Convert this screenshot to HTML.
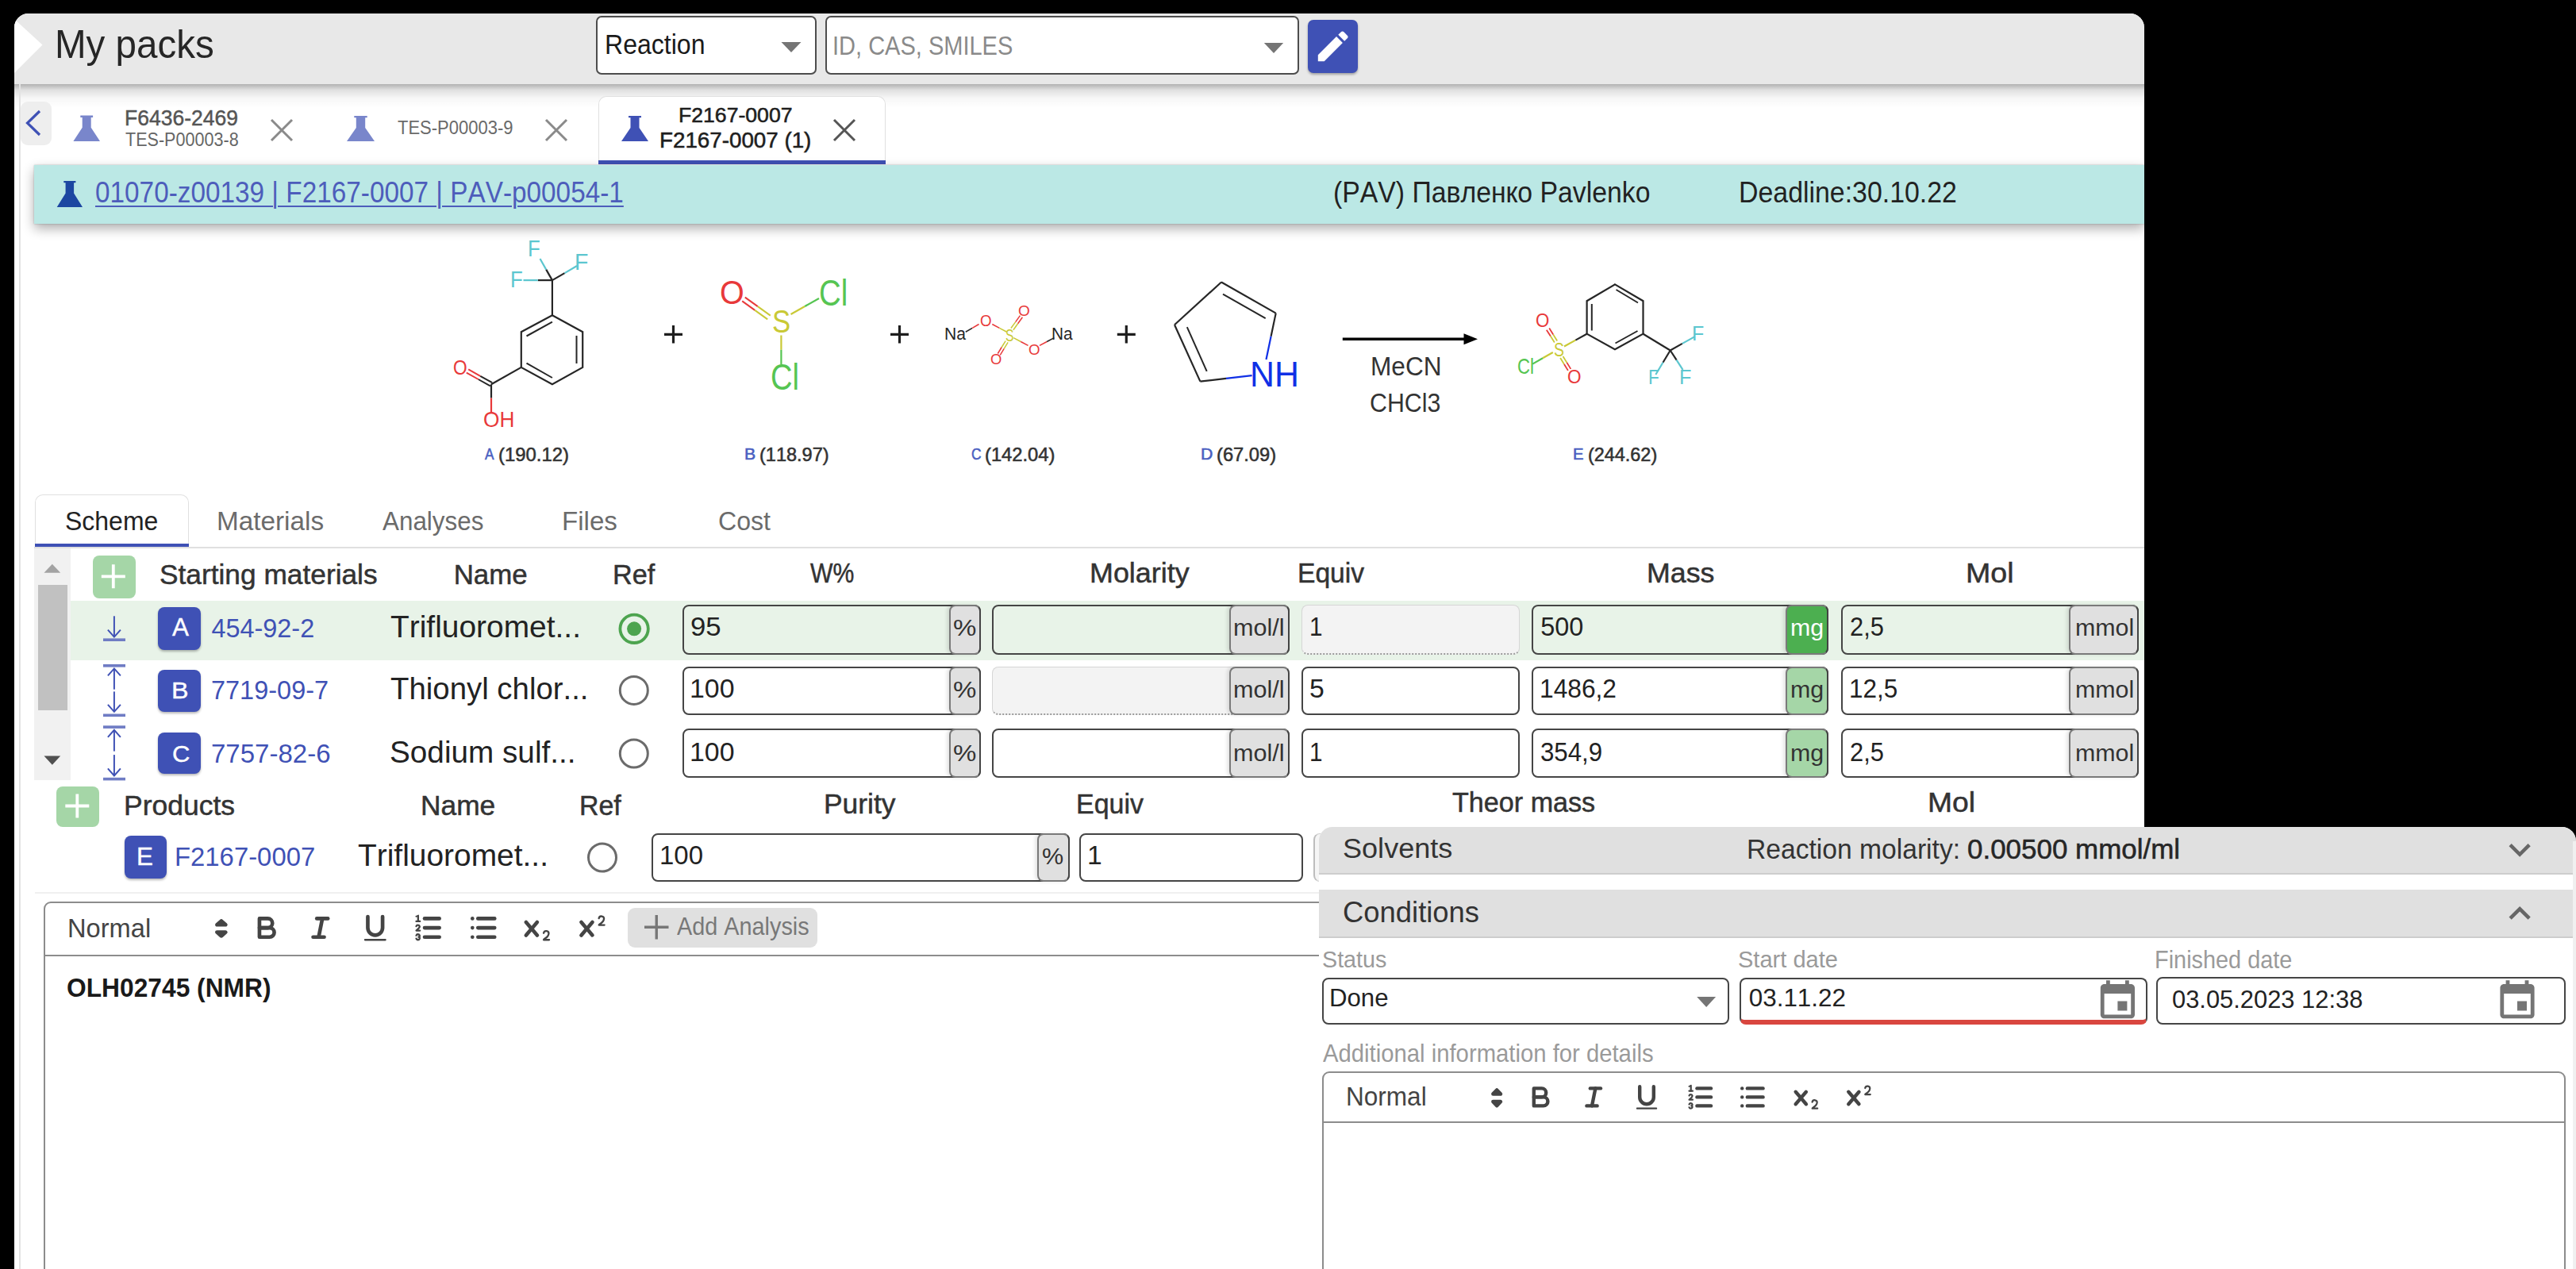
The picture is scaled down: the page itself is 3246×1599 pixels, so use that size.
<!DOCTYPE html><html><head><meta charset="utf-8"><style>
html,body{margin:0;padding:0;}
body{width:3246px;height:1599px;background:#000;position:relative;overflow:hidden;font-family:"Liberation Sans",sans-serif;font-kerning:none;font-variant-ligatures:none;}
.t{position:absolute;white-space:nowrap;line-height:1;transform-origin:0 0;}
.b{position:absolute;box-sizing:border-box;}
.s{position:absolute;overflow:visible;}
</style></head><body>
<div class="b" style="left:18.0px;top:17.0px;width:2684.0px;height:1582.0px;background:#fff;border-radius:18px 18px 0 0;"></div>
<div class="b" style="left:18.0px;top:17.0px;width:2684.0px;height:89.0px;background:#e8e8e8;border-radius:18px 18px 0 0;"></div>
<div class="b" style="left:18.0px;top:106.0px;width:2684.0px;height:30.0px;background:linear-gradient(rgba(0,0,0,0.30),rgba(0,0,0,0.12) 25%,rgba(0,0,0,0.03) 60%,rgba(0,0,0,0));"></div>
<div class="b" style="left:18px;top:17px;width:60px;height:89px;border-radius:18px 0 0 0;overflow:hidden;"><svg width="60" height="89" viewBox="18 17 60 89" style="position:absolute;left:0;top:0"><polygon points="18,24 53.5,56.5 18,92" fill="#fff"/></svg></div>
<div class="t" style="left:69.40px;top:31.79px;font-size:49.85px;color:#262626;transform:scaleX(0.9543);">My packs</div>
<div class="b" style="left:751.0px;top:20.0px;width:277.5px;height:73.5px;background:#fff;border:2px solid #4d4d4d;border-radius:7px;"></div>
<div class="t" style="left:761.57px;top:38.76px;font-size:34.30px;color:#1a1a1a;transform:scaleX(0.9345);">Reaction</div>
<svg class="s" style="left:980px;top:48px;" width="35" height="22" viewBox="980 48 35 22"><polygon points="984.5,53 1009.5,53 997,66" fill="#757575"/></svg>
<div class="b" style="left:1039.5px;top:20.0px;width:597.0px;height:73.5px;background:#fff;border:2px solid #4d4d4d;border-radius:7px;"></div>
<div class="t" style="left:1048.72px;top:41.73px;font-size:32.56px;color:#8a8a8a;transform:scaleX(0.8914);">ID, CAS, SMILES</div>
<svg class="s" style="left:1588px;top:48px;" width="34" height="22" viewBox="1588 48 34 22"><polygon points="1592.8,54 1617.2,54 1605,67" fill="#757575"/></svg>
<div class="b" style="left:1648.0px;top:24.5px;width:63.0px;height:67.2px;background:#3f51b5;border-radius:7px;box-shadow:0 2px 3px rgba(0,0,0,0.3);"></div>
<svg class="s" style="left:1650px;top:30px;" width="60" height="55" viewBox="1650 30 60 55"><g transform="translate(1654.5,33.1) scale(2.1)"><path d="M3 17.25V21h3.75L17.81 9.94l-3.75-3.75L3 17.25zM20.71 7.04c.39-.39.39-1.02 0-1.41l-2.34-2.34c-.39-.39-1.020-.39-1.41 0l-1.83 1.83 3.75 3.75 1.83-1.83z" fill="#fff"/></g></svg>
<div class="b" style="left:24.0px;top:106.0px;width:2.0px;height:1493.0px;background:#e3e3e3;"></div>
<div class="b" style="left:25.6px;top:128.3px;width:39.2px;height:54.3px;background:#eeeeee;border-radius:9px;"></div>
<svg class="s" style="left:25px;top:128px;" width="40" height="55" viewBox="25 128 40 55"><path d="M50,140 L34.5,155 L50,170" stroke="#3f51b5" stroke-width="3.2" fill="none"/></svg>
<svg class="s" style="left:90px;top:140px;" width="40" height="42" viewBox="90 140 40 42"><path d="M101.3,145.6 L117.1,145.6 L117.1,147.9 L114.7,147.9 L114.7,160.8 L126.0,178.0 L92.4,178.0 L103.7,160.8 L103.7,147.9 L101.3,147.9 Z" fill="#7986cb"/></svg>
<div class="t" style="left:156.52px;top:135.93px;font-size:26.89px;color:#555;-webkit-text-stroke:0.45px #555;transform:scaleX(0.9863);">F6436-2469</div>
<div class="t" style="left:158.22px;top:163.99px;font-size:23.98px;color:#666;transform:scaleX(0.8997);">TES-P00003-8</div>
<svg class="s" style="left:336px;top:145px;" width="38" height="38" viewBox="336 145 38 38"><path d="M342,151 L368,177 M368,151 L342,177" stroke="#8a8a8a" stroke-width="3" fill="none"/></svg>
<svg class="s" style="left:435px;top:140px;" width="40" height="42" viewBox="435 140 40 42"><path d="M446.3,146.0 L462.7,146.0 L462.7,148.2 L460.2,148.2 L460.2,161.0 L472.0,178.0 L437.0,178.0 L448.8,161.0 L448.8,148.2 L446.3,148.2 Z" fill="#7986cb"/></svg>
<div class="t" style="left:500.51px;top:148.62px;font-size:24.42px;color:#6a6a6a;transform:scaleX(0.9010);">TES-P00003-9</div>
<svg class="s" style="left:682px;top:145px;" width="38" height="38" viewBox="682 145 38 38"><path d="M688,151 L714,177 M714,151 L688,177" stroke="#8a8a8a" stroke-width="3" fill="none"/></svg>
<div class="b" style="left:754.0px;top:121.0px;width:362.0px;height:86.0px;background:#fff;border:1.5px solid #e0e0e0;border-bottom:none;border-radius:10px 10px 0 0;"></div>
<div class="b" style="left:754.0px;top:202.0px;width:362.0px;height:4.5px;background:#3f51b5;"></div>
<svg class="s" style="left:780px;top:140px;" width="40" height="42" viewBox="780 140 40 42"><path d="M792.0,146.0 L808.0,146.0 L808.0,148.2 L805.5,148.2 L805.5,161.0 L817.0,178.0 L783.0,178.0 L794.5,161.0 L794.5,148.2 L792.0,148.2 Z" fill="#3f51b5"/></svg>
<div class="t" style="left:854.82px;top:131.55px;font-size:26.16px;color:#1e1e1e;-webkit-text-stroke:0.55px #1e1e1e;transform:scaleX(1.0172);">F2167-0007</div>
<div class="t" style="left:831.32px;top:162.62px;font-size:27.62px;color:#1e1e1e;-webkit-text-stroke:0.55px #1e1e1e;transform:scaleX(1.0055);">F2167-0007 (1)</div>
<svg class="s" style="left:1045px;top:145px;" width="38" height="38" viewBox="1045 145 38 38"><path d="M1051,151 L1077,177 M1077,151 L1051,177" stroke="#555" stroke-width="3" fill="none"/></svg>
<div class="b" style="left:43.0px;top:207.6px;width:2659.0px;height:74.4px;background:#bbe8e5;box-shadow:0 6px 14px rgba(0,0,0,0.32),0 0 2px rgba(0,0,0,0.25);"></div>
<svg class="s" style="left:68px;top:224px;" width="40" height="40" viewBox="68 224 40 40"><path d="M80.3,228.0 L95.4,228.0 L95.4,230.3 L93.1,230.3 L93.1,243.5 L104.0,261.0 L71.7,261.0 L82.6,243.5 L82.6,230.3 L80.3,230.3 Z" fill="#1c47a1"/></svg>
<div class="t" style="left:120.40px;top:224.63px;font-size:36.34px;color:#4d5dbb;transform:scaleX(0.9174);text-decoration:underline;text-decoration-thickness:2px;text-underline-offset:4px;">01070-z00139 | F2167-0007 | PAV-p00054-1</div>
<div class="t" style="left:1679.91px;top:224.20px;font-size:37.79px;color:#222;transform:scaleX(0.8938);">(PAV) Павленко Pavlenko</div>
<div class="t" style="left:2190.72px;top:224.20px;font-size:37.79px;color:#222;transform:scaleX(0.8964);">Deadline:30.10.22</div>
<svg class="s" style="left:540px;top:290px;" width="1720" height="310" viewBox="540 290 1720 310"><path d="M695.9,397.3 L734.2,418.2 L734.2,462.9 L695.9,484.3 L656.8,462.9 L656.8,418.2 Z" stroke="#262626" stroke-width="2.2" fill="none" stroke-linejoin="miter"/><line x1="663.5" y1="423.5" x2="695.9" y2="405.6" stroke="#262626" stroke-width="2.0" stroke-linecap="butt"/><line x1="726.5" y1="423.0" x2="726.5" y2="458.0" stroke="#262626" stroke-width="2.0" stroke-linecap="butt"/><line x1="663.5" y1="457.6" x2="695.9" y2="476.0" stroke="#262626" stroke-width="2.0" stroke-linecap="butt"/><line x1="695.9" y1="397.3" x2="695.9" y2="353.1" stroke="#262626" stroke-width="2.2" stroke-linecap="butt"/><line x1="695.9" y1="353.1" x2="688.2" y2="339.6" stroke="#262626" stroke-width="2.2" stroke-linecap="butt"/><line x1="688.2" y1="339.6" x2="680.5" y2="326.0" stroke="#5cc6cf" stroke-width="2.2" stroke-linecap="butt"/><line x1="695.9" y1="353.1" x2="711.5" y2="344.1" stroke="#262626" stroke-width="2.2" stroke-linecap="butt"/><line x1="711.5" y1="344.1" x2="727.0" y2="335.0" stroke="#5cc6cf" stroke-width="2.2" stroke-linecap="butt"/><line x1="695.9" y1="353.1" x2="677.7" y2="353.1" stroke="#262626" stroke-width="2.2" stroke-linecap="butt"/><line x1="677.7" y1="353.1" x2="659.5" y2="353.1" stroke="#5cc6cf" stroke-width="2.2" stroke-linecap="butt"/><line x1="656.8" y1="462.9" x2="619.0" y2="484.3" stroke="#262626" stroke-width="2.2" stroke-linecap="butt"/><line x1="620.2" y1="482.2" x2="605.2" y2="473.8" stroke="#262626" stroke-width="2.0" stroke-linecap="butt"/><line x1="605.2" y1="473.8" x2="590.2" y2="465.4" stroke="#e8393a" stroke-width="2.0" stroke-linecap="butt"/><line x1="617.8" y1="486.4" x2="602.8" y2="478.0" stroke="#262626" stroke-width="2.0" stroke-linecap="butt"/><line x1="602.8" y1="478.0" x2="587.8" y2="469.6" stroke="#e8393a" stroke-width="2.0" stroke-linecap="butt"/><line x1="619.0" y1="484.3" x2="619.0" y2="501.6" stroke="#262626" stroke-width="2.2" stroke-linecap="butt"/><line x1="619.0" y1="501.6" x2="619.0" y2="519.0" stroke="#e8393a" stroke-width="2.2" stroke-linecap="butt"/><line x1="935.2" y1="379.4" x2="951.2" y2="390.9" stroke="#e8393a" stroke-width="2.0" stroke-linecap="butt"/><line x1="951.2" y1="390.9" x2="967.2" y2="402.4" stroke="#c9c936" stroke-width="2.0" stroke-linecap="butt"/><line x1="938.8" y1="374.6" x2="954.8" y2="386.1" stroke="#e8393a" stroke-width="2.0" stroke-linecap="butt"/><line x1="954.8" y1="386.1" x2="970.8" y2="397.6" stroke="#c9c936" stroke-width="2.0" stroke-linecap="butt"/><line x1="996.5" y1="396.0" x2="1014.2" y2="386.0" stroke="#c9c936" stroke-width="2.2" stroke-linecap="butt"/><line x1="1014.2" y1="386.0" x2="1032.0" y2="376.0" stroke="#56c552" stroke-width="2.2" stroke-linecap="butt"/><line x1="984.4" y1="422.5" x2="984.4" y2="440.8" stroke="#c9c936" stroke-width="2.2" stroke-linecap="butt"/><line x1="984.4" y1="440.8" x2="984.4" y2="459.0" stroke="#56c552" stroke-width="2.2" stroke-linecap="butt"/><line x1="1216.8" y1="418.3" x2="1225.2" y2="413.4" stroke="#262626" stroke-width="1.6" stroke-linecap="butt"/><line x1="1225.2" y1="413.4" x2="1233.5" y2="408.5" stroke="#e8393a" stroke-width="1.6" stroke-linecap="butt"/><line x1="1250.3" y1="408.5" x2="1259.4" y2="413.4" stroke="#e8393a" stroke-width="1.6" stroke-linecap="butt"/><line x1="1259.4" y1="413.4" x2="1268.6" y2="418.3" stroke="#c9c936" stroke-width="1.6" stroke-linecap="butt"/><line x1="1276.9" y1="415.7" x2="1282.6" y2="407.7" stroke="#c9c936" stroke-width="1.5" stroke-linecap="butt"/><line x1="1282.6" y1="407.7" x2="1288.4" y2="399.8" stroke="#e8393a" stroke-width="1.5" stroke-linecap="butt"/><line x1="1273.9" y1="413.5" x2="1279.7" y2="405.6" stroke="#c9c936" stroke-width="1.5" stroke-linecap="butt"/><line x1="1279.7" y1="405.6" x2="1285.4" y2="397.6" stroke="#e8393a" stroke-width="1.5" stroke-linecap="butt"/><line x1="1267.1" y1="429.6" x2="1262.2" y2="437.5" stroke="#c9c936" stroke-width="1.5" stroke-linecap="butt"/><line x1="1262.2" y1="437.5" x2="1257.3" y2="445.5" stroke="#e8393a" stroke-width="1.5" stroke-linecap="butt"/><line x1="1270.1" y1="431.4" x2="1265.2" y2="439.4" stroke="#c9c936" stroke-width="1.5" stroke-linecap="butt"/><line x1="1265.2" y1="439.4" x2="1260.3" y2="447.3" stroke="#e8393a" stroke-width="1.5" stroke-linecap="butt"/><line x1="1277.1" y1="425.6" x2="1286.3" y2="430.5" stroke="#c9c936" stroke-width="1.6" stroke-linecap="butt"/><line x1="1286.3" y1="430.5" x2="1295.5" y2="435.4" stroke="#e8393a" stroke-width="1.6" stroke-linecap="butt"/><line x1="1310.0" y1="435.4" x2="1319.2" y2="430.5" stroke="#e8393a" stroke-width="1.6" stroke-linecap="butt"/><line x1="1319.2" y1="430.5" x2="1328.4" y2="425.6" stroke="#262626" stroke-width="1.6" stroke-linecap="butt"/><line x1="1539.0" y1="355.5" x2="1607.7" y2="394.6" stroke="#262626" stroke-width="2.2" stroke-linecap="butt"/><line x1="1539.0" y1="355.5" x2="1480.0" y2="409.2" stroke="#262626" stroke-width="2.2" stroke-linecap="butt"/><line x1="1480.0" y1="409.2" x2="1512.4" y2="480.6" stroke="#262626" stroke-width="2.2" stroke-linecap="butt"/><line x1="1607.7" y1="394.6" x2="1601.6" y2="423.8" stroke="#262626" stroke-width="2.2" stroke-linecap="butt"/><line x1="1601.6" y1="423.8" x2="1595.5" y2="453.0" stroke="#1030e6" stroke-width="2.2" stroke-linecap="butt"/><line x1="1577.6" y1="473.2" x2="1545.0" y2="476.9" stroke="#1030e6" stroke-width="2.2" stroke-linecap="butt"/><line x1="1545.0" y1="476.9" x2="1512.4" y2="480.6" stroke="#262626" stroke-width="2.2" stroke-linecap="butt"/><line x1="1541.0" y1="370.6" x2="1594.7" y2="401.2" stroke="#262626" stroke-width="2.0" stroke-linecap="butt"/><line x1="1495.8" y1="412.2" x2="1520.7" y2="467.9" stroke="#262626" stroke-width="2.0" stroke-linecap="butt"/><line x1="1691.8" y1="427.3" x2="1846" y2="427.3" stroke="#000" stroke-width="3.4"/><polygon points="1844.5,420.3 1862,427.3 1844.5,434.3" fill="#000"/><path d="M2035.0,358.4 L2070.5,379.2 L2070.5,420.7 L2035.0,440.3 L1999.6,420.7 L1999.6,379.2 Z" stroke="#262626" stroke-width="2.2" fill="none" stroke-linejoin="miter"/><line x1="2005.8" y1="383.0" x2="2005.8" y2="416.5" stroke="#262626" stroke-width="2.0" stroke-linecap="butt"/><line x1="2036.5" y1="365.0" x2="2064.0" y2="381.5" stroke="#262626" stroke-width="2.0" stroke-linecap="butt"/><line x1="2035.5" y1="432.5" x2="2063.5" y2="417.0" stroke="#262626" stroke-width="2.0" stroke-linecap="butt"/><line x1="1999.6" y1="420.7" x2="1985.3" y2="428.6" stroke="#262626" stroke-width="2.2" stroke-linecap="butt"/><line x1="1985.3" y1="428.6" x2="1971.0" y2="436.5" stroke="#c9c936" stroke-width="2.2" stroke-linecap="butt"/><line x1="1962.2" y1="429.4" x2="1957.2" y2="421.5" stroke="#c9c936" stroke-width="1.8" stroke-linecap="butt"/><line x1="1957.2" y1="421.5" x2="1952.2" y2="413.5" stroke="#e8393a" stroke-width="1.8" stroke-linecap="butt"/><line x1="1958.8" y1="431.6" x2="1953.8" y2="423.6" stroke="#c9c936" stroke-width="1.8" stroke-linecap="butt"/><line x1="1953.8" y1="423.6" x2="1948.8" y2="415.7" stroke="#e8393a" stroke-width="1.8" stroke-linecap="butt"/><line x1="1966.1" y1="451.0" x2="1971.0" y2="459.0" stroke="#c9c936" stroke-width="1.8" stroke-linecap="butt"/><line x1="1971.0" y1="459.0" x2="1975.9" y2="466.9" stroke="#e8393a" stroke-width="1.8" stroke-linecap="butt"/><line x1="1969.5" y1="449.0" x2="1974.4" y2="456.9" stroke="#c9c936" stroke-width="1.8" stroke-linecap="butt"/><line x1="1974.4" y1="456.9" x2="1979.3" y2="464.9" stroke="#e8393a" stroke-width="1.8" stroke-linecap="butt"/><line x1="1956.8" y1="444.0" x2="1944.0" y2="451.3" stroke="#c9c936" stroke-width="2.2" stroke-linecap="butt"/><line x1="1944.0" y1="451.3" x2="1931.2" y2="458.6" stroke="#56c552" stroke-width="2.2" stroke-linecap="butt"/><line x1="2070.5" y1="420.7" x2="2104.7" y2="441.5" stroke="#262626" stroke-width="2.2" stroke-linecap="butt"/><line x1="2104.7" y1="441.5" x2="2119.9" y2="432.9" stroke="#262626" stroke-width="2.2" stroke-linecap="butt"/><line x1="2119.9" y1="432.9" x2="2135.2" y2="424.4" stroke="#5cc6cf" stroke-width="2.2" stroke-linecap="butt"/><line x1="2104.7" y1="441.5" x2="2095.5" y2="456.8" stroke="#262626" stroke-width="2.2" stroke-linecap="butt"/><line x1="2095.5" y1="456.8" x2="2086.3" y2="472.0" stroke="#5cc6cf" stroke-width="2.2" stroke-linecap="butt"/><line x1="2104.7" y1="441.5" x2="2112.6" y2="453.7" stroke="#262626" stroke-width="2.2" stroke-linecap="butt"/><line x1="2112.6" y1="453.7" x2="2120.5" y2="465.9" stroke="#5cc6cf" stroke-width="2.2" stroke-linecap="butt"/><path d="M837.0,421.3 H860.0 M848.5,410 V432.6" stroke="#1e1e1e" stroke-width="3.2"/><path d="M1122.0,421.3 H1145.0 M1133.5,410 V432.6" stroke="#1e1e1e" stroke-width="3.2"/><path d="M1407.8,421.3 H1430.8 M1419.3,410 V432.6" stroke="#1e1e1e" stroke-width="3.2"/></svg>
<div class="t" style="left:665.29px;top:299.39px;font-size:29.07px;color:#5cc6cf;transform:scaleX(0.8868);">F</div>
<div class="t" style="left:724.27px;top:315.76px;font-size:29.22px;color:#5cc6cf;transform:scaleX(0.9734);">F</div>
<div class="t" style="left:642.59px;top:337.14px;font-size:29.36px;color:#5cc6cf;transform:scaleX(0.8780);">F</div>
<div class="t" style="left:571.42px;top:449.85px;font-size:26.16px;color:#e8393a;transform:scaleX(0.8679);">O</div>
<div class="t" style="left:608.76px;top:515.24px;font-size:27.47px;color:#e8393a;transform:scaleX(0.9558);">OH</div>
<div class="t" style="left:907.13px;top:347.81px;font-size:42.15px;color:#e8393a;transform:scaleX(0.9384);">O</div>
<div class="t" style="left:1032.35px;top:345.69px;font-size:46.08px;color:#56c552;transform:scaleX(0.8323);">Cl</div>
<div class="t" style="left:972.92px;top:384.54px;font-size:40.70px;color:#c9c936;transform:scaleX(0.8536);">S</div>
<div class="t" style="left:970.56px;top:451.62px;font-size:46.51px;color:#56c552;transform:scaleX(0.8193);">Cl</div>
<div class="t" style="left:1189.87px;top:410.47px;font-size:22.24px;color:#262626;transform:scaleX(0.9472);">Na</div>
<div class="t" style="left:1235.31px;top:394.64px;font-size:19.91px;color:#e8393a;transform:scaleX(0.9417);">O</div>
<div class="t" style="left:1266.79px;top:410.60px;font-size:22.67px;color:#c9c936;transform:scaleX(0.6895);">S</div>
<div class="t" style="left:1282.90px;top:381.76px;font-size:19.19px;color:#e8393a;transform:scaleX(0.9926);">O</div>
<div class="t" style="left:1247.53px;top:442.76px;font-size:19.19px;color:#e8393a;transform:scaleX(0.9621);">O</div>
<div class="t" style="left:1295.71px;top:430.76px;font-size:19.19px;color:#e8393a;transform:scaleX(0.9773);">O</div>
<div class="t" style="left:1325.49px;top:410.47px;font-size:22.24px;color:#262626;transform:scaleX(0.9360);">Na</div>
<div class="t" style="left:1575.38px;top:450.34px;font-size:44.48px;color:#1030e6;transform:scaleX(0.9638);">NH</div>
<div class="t" style="left:1957.72px;top:428.65px;font-size:24.27px;color:#c9c936;transform:scaleX(0.8015);">S</div>
<div class="t" style="left:1935.15px;top:392.17px;font-size:24.13px;color:#e8393a;transform:scaleX(0.9229);">O</div>
<div class="t" style="left:1975.23px;top:462.97px;font-size:24.13px;color:#e8393a;transform:scaleX(0.9350);">O</div>
<div class="t" style="left:1911.78px;top:446.68px;font-size:28.49px;color:#56c552;transform:scaleX(0.7771);">Cl</div>
<div class="t" style="left:2131.95px;top:406.78px;font-size:26.60px;color:#5cc6cf;transform:scaleX(0.9384);">F</div>
<div class="t" style="left:2077.15px;top:463.03px;font-size:25.00px;color:#5cc6cf;transform:scaleX(0.9002);">F</div>
<div class="t" style="left:2115.94px;top:462.89px;font-size:25.87px;color:#5cc6cf;transform:scaleX(0.9727);">F</div>
<div class="t" style="left:1727.01px;top:444.65px;font-size:33.72px;color:#333;transform:scaleX(0.9374);">MeCN</div>
<div class="t" style="left:1726.46px;top:491.03px;font-size:33.87px;color:#333;transform:scaleX(0.8951);">CHCl3</div>
<div class="t" style="left:610.57px;top:562.02px;font-size:20.64px;color:#4a5fc1;-webkit-text-stroke:0.6px #4a5fc1;transform:scaleX(0.8330);">A</div>
<div class="t" style="left:627.82px;top:561.51px;font-size:23.26px;color:#333;-webkit-text-stroke:0.55px #333;transform:scaleX(1.0271);">(190.12)</div>
<div class="t" style="left:937.96px;top:562.02px;font-size:20.64px;color:#4a5fc1;-webkit-text-stroke:0.6px #4a5fc1;transform:scaleX(1.0287);">B</div>
<div class="t" style="left:956.84px;top:561.51px;font-size:23.26px;color:#333;-webkit-text-stroke:0.55px #333;transform:scaleX(1.0115);">(118.97)</div>
<div class="t" style="left:1223.72px;top:562.02px;font-size:20.64px;color:#4a5fc1;-webkit-text-stroke:0.6px #4a5fc1;transform:scaleX(0.8416);">C</div>
<div class="t" style="left:1241.43px;top:561.51px;font-size:23.26px;color:#333;-webkit-text-stroke:0.55px #333;transform:scaleX(1.0211);">(142.04)</div>
<div class="t" style="left:1513.25px;top:562.02px;font-size:20.64px;color:#4a5fc1;-webkit-text-stroke:0.6px #4a5fc1;transform:scaleX(1.0307);">D</div>
<div class="t" style="left:1533.43px;top:561.51px;font-size:23.26px;color:#333;-webkit-text-stroke:0.55px #333;transform:scaleX(1.0184);">(67.09)</div>
<div class="t" style="left:1982.04px;top:562.02px;font-size:20.64px;color:#4a5fc1;-webkit-text-stroke:0.6px #4a5fc1;transform:scaleX(0.9833);">E</div>
<div class="t" style="left:2000.55px;top:561.51px;font-size:23.26px;color:#333;-webkit-text-stroke:0.55px #333;transform:scaleX(1.0068);">(244.62)</div>
<div class="b" style="left:43.5px;top:622.5px;width:194.1px;height:67.5px;background:#fff;border:1.5px solid #e0e0e0;border-bottom:none;border-radius:10px 10px 0 0;"></div>
<div class="b" style="left:43.0px;top:689.0px;width:2659.0px;height:2.0px;background:#e0e0e0;"></div>
<div class="b" style="left:43.5px;top:684.6px;width:194.1px;height:4.2px;background:#3f51b5;"></div>
<div class="t" style="left:82.05px;top:639.20px;font-size:34.01px;color:#222;transform:scaleX(0.9407);">Scheme</div>
<div class="t" style="left:272.87px;top:639.20px;font-size:34.01px;color:#6b6b6b;transform:scaleX(0.9794);">Materials</div>
<div class="t" style="left:482.44px;top:639.20px;font-size:34.01px;color:#6b6b6b;transform:scaleX(0.9231);">Analyses</div>
<div class="t" style="left:707.68px;top:639.20px;font-size:34.01px;color:#6b6b6b;transform:scaleX(0.9736);">Files</div>
<div class="t" style="left:904.77px;top:639.20px;font-size:34.01px;color:#6b6b6b;transform:scaleX(0.9432);">Cost</div>
<div class="b" style="left:43.4px;top:691.0px;width:45.5px;height:292.0px;background:#f1f1f1;"></div>
<svg class="s" style="left:50px;top:705px;" width="32" height="265" viewBox="50 705 32 265"><polygon points="55.5,721.8 76.2,721.8 65.85,710.7" fill="#a3a3a3"/><polygon points="55.5,952.6 76.2,952.6 65.85,963.8" fill="#505050"/></svg>
<div class="b" style="left:47.5px;top:737.0px;width:37.3px;height:157.7px;background:#c1c1c1;"></div>
<div class="b" style="left:116.9px;top:700.2px;width:54.1px;height:53.5px;background:#a5d6a7;border-radius:8px;"></div>
<svg class="s" style="left:116px;top:700px;" width="56" height="54" viewBox="116 700 56 54"><path d="M127.8,726.3 H157.8 M142.8,711.3 V741.3" stroke="#fff" stroke-width="3.8"/></svg>
<div class="t" style="left:201.00px;top:707.06px;font-size:34.88px;color:#333;-webkit-text-stroke:0.5px #333;transform:scaleX(1.0120);">Starting materials</div>
<div class="t" style="left:571.64px;top:707.06px;font-size:34.88px;color:#333;-webkit-text-stroke:0.5px #333;">Name</div>
<div class="t" style="left:771.69px;top:707.06px;font-size:34.88px;color:#333;-webkit-text-stroke:0.5px #333;transform:scaleX(0.9811);">Ref</div>
<div class="t" style="left:1021.37px;top:705.19px;font-size:34.74px;color:#333;-webkit-text-stroke:0.5px #333;transform:scaleX(0.8686);">W%</div>
<div class="t" style="left:1373.46px;top:705.19px;font-size:34.74px;color:#333;-webkit-text-stroke:0.5px #333;transform:scaleX(1.0330);">Molarity</div>
<div class="t" style="left:1634.74px;top:705.19px;font-size:34.74px;color:#333;-webkit-text-stroke:0.5px #333;transform:scaleX(0.9675);">Equiv</div>
<div class="t" style="left:2075.47px;top:705.19px;font-size:34.74px;color:#333;-webkit-text-stroke:0.5px #333;transform:scaleX(1.0293);">Mass</div>
<div class="t" style="left:2477.21px;top:705.19px;font-size:34.74px;color:#333;-webkit-text-stroke:0.5px #333;transform:scaleX(1.0826);">Mol</div>
<div class="b" style="left:88.9px;top:757.0px;width:2613.1px;height:75.0px;background:#e8f3e8;"></div>
<svg class="s" style="left:125px;top:770px;" width="40" height="220" viewBox="125 770 40 220"><path d="M143.9,776.3 V802.6" stroke="#3f51b5" stroke-width="2"/><path d="M135.9,793.6 L143.9,802.6 L151.9,793.6" stroke="#3f51b5" stroke-width="2" fill="none"/><rect x="130" y="804.4" width="28" height="3.6" fill="#6f7cc4"/><path d="M143.9,842.4 V868.7" stroke="#3f51b5" stroke-width="2"/><path d="M135.9,851.4 L143.9,842.4 L151.9,851.4" stroke="#3f51b5" stroke-width="2" fill="none"/><rect x="130" y="837" width="28" height="3.6" fill="#6f7cc4"/><path d="M143.9,871.4 V896.8" stroke="#3f51b5" stroke-width="2"/><path d="M135.9,887.8 L143.9,896.8 L151.9,887.8" stroke="#3f51b5" stroke-width="2" fill="none"/><rect x="130" y="899.5" width="28" height="3.6" fill="#6f7cc4"/><path d="M143.9,919.8 V946.6" stroke="#3f51b5" stroke-width="2"/><path d="M135.9,928.8 L143.9,919.8 L151.9,928.8" stroke="#3f51b5" stroke-width="2" fill="none"/><rect x="130" y="914.3" width="28" height="3.6" fill="#6f7cc4"/><path d="M143.9,951.1 V977.4" stroke="#3f51b5" stroke-width="2"/><path d="M135.9,968.4 L143.9,977.4 L151.9,968.4" stroke="#3f51b5" stroke-width="2" fill="none"/><rect x="130" y="979.8" width="28" height="3.6" fill="#6f7cc4"/></svg>
<div class="b" style="left:199.1px;top:765.4px;width:54.0px;height:53.5px;background:#3f51b5;border-radius:8px;box-shadow:0 2px 3px rgba(0,0,0,0.28);"></div>
<div class="t" style="left:216.84px;top:775.36px;font-size:31.10px;color:#fff;-webkit-text-stroke:0.4px #fff;transform:scaleX(1.0085);">A</div>
<div class="b" style="left:199.1px;top:843.5px;width:54.0px;height:53.5px;background:#3f51b5;border-radius:8px;box-shadow:0 2px 3px rgba(0,0,0,0.28);"></div>
<div class="t" style="left:216.05px;top:853.88px;font-size:30.38px;color:#fff;-webkit-text-stroke:0.4px #fff;transform:scaleX(1.0638);">B</div>
<div class="b" style="left:199.1px;top:923.4px;width:54.0px;height:52.1px;background:#3f51b5;border-radius:8px;box-shadow:0 2px 3px rgba(0,0,0,0.28);"></div>
<div class="t" style="left:217.13px;top:933.58px;font-size:30.38px;color:#fff;-webkit-text-stroke:0.4px #fff;transform:scaleX(1.0188);">C</div>
<div class="t" style="left:266.46px;top:775.56px;font-size:32.41px;color:#3f51b5;">454-92-2</div>
<div class="t" style="left:265.53px;top:853.56px;font-size:32.41px;color:#3f51b5;transform:scaleX(1.0022);">7719-09-7</div>
<div class="t" style="left:265.51px;top:933.76px;font-size:32.41px;color:#3f51b5;transform:scaleX(1.0188);">7757-82-6</div>
<div class="t" style="left:492.33px;top:769.77px;font-size:39.24px;color:#222;transform:scaleX(0.9916);">Trifluoromet...</div>
<div class="t" style="left:492.34px;top:847.77px;font-size:39.24px;color:#222;transform:scaleX(0.9780);">Thionyl chlor...</div>
<div class="t" style="left:491.44px;top:927.97px;font-size:39.24px;color:#222;transform:scaleX(0.9867);">Sodium sulf...</div>
<svg class="s" style="left:775px;top:770px;" width="50" height="205" viewBox="775 770 50 205"><circle cx="799.1" cy="792.3" r="17.7" stroke="#4da44f" stroke-width="3.8" fill="none"/><circle cx="799.1" cy="792.3" r="9" fill="#4da44f"/><circle cx="798.8" cy="869.9" r="17.5" stroke="#6b6b6b" stroke-width="3" fill="none"/><circle cx="798.8" cy="949.5" r="17.5" stroke="#6b6b6b" stroke-width="3" fill="none"/></svg>
<div class="b" style="left:859.7px;top:761.6px;width:376.0px;height:63.7px;background:#e8f3e8;border:2px solid #454545;border-radius:8px;"></div>
<div class="t" style="left:870.17px;top:773.96px;font-size:32.41px;color:#222;transform:scaleX(1.0732);">95</div>
<div class="b" style="left:1195.6px;top:761.6px;width:40.1px;height:63.7px;background:#e0e0e0;border:2px solid #7a7a7a;border-right-color:#444;border-radius:8px;box-shadow:-3px 0 4px rgba(0,0,0,0.10);"></div>
<div class="t" style="left:1201.32px;top:776.42px;font-size:29.50px;color:#333;transform:scaleX(1.1191);">%</div>
<div class="b" style="left:1250.0px;top:761.6px;width:374.8px;height:63.7px;background:#e8f3e8;border:2px solid #454545;border-radius:8px;"></div>
<div class="b" style="left:1549.3px;top:761.6px;width:75.5px;height:63.7px;background:#e0e0e0;border:2px solid #7a7a7a;border-right-color:#444;border-radius:8px;box-shadow:-3px 0 4px rgba(0,0,0,0.10);"></div>
<div class="t" style="left:1554.27px;top:776.42px;font-size:29.50px;color:#333;transform:scaleX(1.0368);">mol/l</div>
<div class="b" style="left:1639.7px;top:761.6px;width:275.7px;height:63.7px;background:#f3f3f3;border:1.5px solid #d6d6d6;border-bottom:2px dotted #9a9a9a;border-radius:8px;"></div>
<div class="t" style="left:1649.54px;top:773.96px;font-size:32.41px;color:#222;transform:scaleX(0.9159);">1</div>
<div class="b" style="left:1930.4px;top:761.6px;width:374.1px;height:63.7px;background:#e8f3e8;border:2px solid #454545;border-radius:8px;"></div>
<div class="t" style="left:1941.20px;top:773.96px;font-size:32.41px;color:#222;">500</div>
<div class="b" style="left:2250.4px;top:761.6px;width:54.1px;height:63.7px;background:#4caf50;border:2px solid #7a7a7a;border-right-color:#444;border-radius:8px;box-shadow:-3px 0 4px rgba(0,0,0,0.10);"></div>
<div class="t" style="left:2256.28px;top:776.42px;font-size:29.50px;color:#fff;transform:scaleX(1.0291);">mg</div>
<div class="b" style="left:2320.3px;top:761.6px;width:375.0px;height:63.7px;background:#e8f3e8;border:2px solid #454545;border-radius:8px;"></div>
<div class="t" style="left:2330.85px;top:773.96px;font-size:32.41px;color:#222;transform:scaleX(0.9509);">2,5</div>
<div class="b" style="left:2607.4px;top:761.6px;width:87.9px;height:63.7px;background:#e0e0e0;border:2px solid #7a7a7a;border-right-color:#444;border-radius:8px;box-shadow:-3px 0 4px rgba(0,0,0,0.10);"></div>
<div class="t" style="left:2614.69px;top:776.42px;font-size:29.50px;color:#333;transform:scaleX(1.0282);">mmol</div>
<div class="b" style="left:859.7px;top:839.6px;width:376.0px;height:61.0px;background:#fff;border:2px solid #454545;border-radius:8px;"></div>
<div class="t" style="left:869.22px;top:851.96px;font-size:32.41px;color:#222;transform:scaleX(1.0448);">100</div>
<div class="b" style="left:1195.6px;top:839.6px;width:40.1px;height:61.0px;background:#e0e0e0;border:2px solid #7a7a7a;border-right-color:#444;border-radius:8px;box-shadow:-3px 0 4px rgba(0,0,0,0.10);"></div>
<div class="t" style="left:1201.32px;top:854.42px;font-size:29.50px;color:#333;transform:scaleX(1.1191);">%</div>
<div class="b" style="left:1250.0px;top:839.6px;width:374.8px;height:61.0px;background:#f3f3f3;border:1.5px solid #d6d6d6;border-bottom:2px dotted #9a9a9a;border-radius:8px;"></div>
<div class="b" style="left:1549.3px;top:839.6px;width:75.5px;height:61.0px;background:#e0e0e0;border:2px solid #7a7a7a;border-right-color:#444;border-radius:8px;box-shadow:-3px 0 4px rgba(0,0,0,0.10);"></div>
<div class="t" style="left:1554.27px;top:854.42px;font-size:29.50px;color:#333;transform:scaleX(1.0368);">mol/l</div>
<div class="b" style="left:1639.7px;top:839.6px;width:275.7px;height:61.0px;background:#fff;border:2px solid #454545;border-radius:8px;"></div>
<div class="t" style="left:1650.45px;top:851.96px;font-size:32.41px;color:#222;transform:scaleX(1.0412);">5</div>
<div class="b" style="left:1930.4px;top:839.6px;width:374.1px;height:61.0px;background:#fff;border:2px solid #454545;border-radius:8px;"></div>
<div class="t" style="left:1940.08px;top:851.96px;font-size:32.41px;color:#222;transform:scaleX(0.9786);">1486,2</div>
<div class="b" style="left:2250.4px;top:839.6px;width:54.1px;height:61.0px;background:#a5d6a7;border:2px solid #7a7a7a;border-right-color:#444;border-radius:8px;box-shadow:-3px 0 4px rgba(0,0,0,0.10);"></div>
<div class="t" style="left:2256.28px;top:854.42px;font-size:29.50px;color:#333;transform:scaleX(1.0291);">mg</div>
<div class="b" style="left:2320.3px;top:839.6px;width:375.0px;height:61.0px;background:#fff;border:2px solid #454545;border-radius:8px;"></div>
<div class="t" style="left:2330.00px;top:851.96px;font-size:32.41px;color:#222;transform:scaleX(0.9721);">12,5</div>
<div class="b" style="left:2607.4px;top:839.6px;width:87.9px;height:61.0px;background:#e0e0e0;border:2px solid #7a7a7a;border-right-color:#444;border-radius:8px;box-shadow:-3px 0 4px rgba(0,0,0,0.10);"></div>
<div class="t" style="left:2614.69px;top:854.42px;font-size:29.50px;color:#333;transform:scaleX(1.0282);">mmol</div>
<div class="b" style="left:859.7px;top:917.6px;width:376.0px;height:62.9px;background:#fff;border:2px solid #454545;border-radius:8px;"></div>
<div class="t" style="left:869.22px;top:931.56px;font-size:32.41px;color:#222;transform:scaleX(1.0448);">100</div>
<div class="b" style="left:1195.6px;top:917.6px;width:40.1px;height:62.9px;background:#e0e0e0;border:2px solid #7a7a7a;border-right-color:#444;border-radius:8px;box-shadow:-3px 0 4px rgba(0,0,0,0.10);"></div>
<div class="t" style="left:1201.32px;top:934.02px;font-size:29.50px;color:#333;transform:scaleX(1.1191);">%</div>
<div class="b" style="left:1250.0px;top:917.6px;width:374.8px;height:62.9px;background:#fff;border:2px solid #454545;border-radius:8px;"></div>
<div class="b" style="left:1549.3px;top:917.6px;width:75.5px;height:62.9px;background:#e0e0e0;border:2px solid #7a7a7a;border-right-color:#444;border-radius:8px;box-shadow:-3px 0 4px rgba(0,0,0,0.10);"></div>
<div class="t" style="left:1554.27px;top:934.02px;font-size:29.50px;color:#333;transform:scaleX(1.0368);">mol/l</div>
<div class="b" style="left:1639.7px;top:917.6px;width:275.7px;height:62.9px;background:#fff;border:2px solid #454545;border-radius:8px;"></div>
<div class="t" style="left:1649.54px;top:931.56px;font-size:32.41px;color:#222;transform:scaleX(0.9159);">1</div>
<div class="b" style="left:1930.4px;top:917.6px;width:374.1px;height:62.9px;background:#fff;border:2px solid #454545;border-radius:8px;"></div>
<div class="t" style="left:1941.31px;top:931.56px;font-size:32.41px;color:#222;transform:scaleX(0.9637);">354,9</div>
<div class="b" style="left:2250.4px;top:917.6px;width:54.1px;height:62.9px;background:#a5d6a7;border:2px solid #7a7a7a;border-right-color:#444;border-radius:8px;box-shadow:-3px 0 4px rgba(0,0,0,0.10);"></div>
<div class="t" style="left:2256.28px;top:934.02px;font-size:29.50px;color:#333;transform:scaleX(1.0291);">mg</div>
<div class="b" style="left:2320.3px;top:917.6px;width:375.0px;height:62.9px;background:#fff;border:2px solid #454545;border-radius:8px;"></div>
<div class="t" style="left:2330.85px;top:931.56px;font-size:32.41px;color:#222;transform:scaleX(0.9509);">2,5</div>
<div class="b" style="left:2607.4px;top:917.6px;width:87.9px;height:62.9px;background:#e0e0e0;border:2px solid #7a7a7a;border-right-color:#444;border-radius:8px;box-shadow:-3px 0 4px rgba(0,0,0,0.10);"></div>
<div class="t" style="left:2614.69px;top:934.02px;font-size:29.50px;color:#333;transform:scaleX(1.0282);">mmol</div>
<div class="b" style="left:71.4px;top:990.7px;width:54.1px;height:50.9px;background:#a5d6a7;border-radius:8px;"></div>
<svg class="s" style="left:71px;top:990px;" width="55" height="52" viewBox="71 990 55 52"><path d="M82.3,1015.5 H112.3 M97.3,1000.5 V1030.5" stroke="#fff" stroke-width="3.8"/></svg>
<div class="t" style="left:156.09px;top:997.89px;font-size:34.74px;color:#333;-webkit-text-stroke:0.5px #333;transform:scaleX(1.0219);">Products</div>
<div class="t" style="left:529.50px;top:997.89px;font-size:34.74px;color:#333;-webkit-text-stroke:0.5px #333;transform:scaleX(1.0173);">Name</div>
<div class="t" style="left:730.22px;top:997.89px;font-size:34.74px;color:#333;-webkit-text-stroke:0.5px #333;transform:scaleX(0.9754);">Ref</div>
<div class="t" style="left:1037.80px;top:996.16px;font-size:34.88px;color:#333;-webkit-text-stroke:0.5px #333;transform:scaleX(1.0146);">Purity</div>
<div class="t" style="left:1355.81px;top:996.16px;font-size:34.88px;color:#333;-webkit-text-stroke:0.5px #333;transform:scaleX(0.9741);">Equiv</div>
<div class="t" style="left:1830.03px;top:994.46px;font-size:34.88px;color:#333;-webkit-text-stroke:0.5px #333;transform:scaleX(0.9785);">Theor mass</div>
<div class="t" style="left:2429.44px;top:994.46px;font-size:34.88px;color:#333;-webkit-text-stroke:0.5px #333;transform:scaleX(1.0683);">Mol</div>
<div class="b" style="left:156.7px;top:1053.4px;width:53.2px;height:53.5px;background:#3f51b5;border-radius:8px;box-shadow:0 2px 3px rgba(0,0,0,0.28);"></div>
<div class="t" style="left:172.43px;top:1064.16px;font-size:30.52px;color:#fff;-webkit-text-stroke:0.4px #fff;transform:scaleX(1.0276);">E</div>
<div class="t" style="left:219.90px;top:1063.56px;font-size:32.41px;color:#3f51b5;transform:scaleX(1.0140);">F2167-0007</div>
<div class="t" style="left:450.93px;top:1057.77px;font-size:39.24px;color:#222;transform:scaleX(0.9916);">Trifluoromet...</div>
<svg class="s" style="left:735px;top:1055px;" width="50" height="50" viewBox="735 1055 50 50"><circle cx="759" cy="1080.5" r="17.5" stroke="#6b6b6b" stroke-width="3" fill="none"/></svg>
<div class="b" style="left:821.0px;top:1049.6px;width:526.9px;height:61.4px;background:#fff;border:2px solid #454545;border-radius:8px;"></div>
<div class="t" style="left:830.59px;top:1061.56px;font-size:32.41px;color:#222;transform:scaleX(1.0170);">100</div>
<div class="b" style="left:1306.8px;top:1049.6px;width:41.1px;height:61.4px;background:#e0e0e0;border:2px solid #7a7a7a;border-right-color:#444;border-radius:8px;box-shadow:-3px 0 4px rgba(0,0,0,0.10);"></div>
<div class="t" style="left:1312.91px;top:1064.02px;font-size:29.50px;color:#333;transform:scaleX(1.0362);">%</div>
<div class="b" style="left:1360.4px;top:1049.6px;width:282.1px;height:61.4px;background:#fff;border:2px solid #454545;border-radius:8px;"></div>
<div class="t" style="left:1369.94px;top:1061.56px;font-size:32.41px;color:#222;transform:scaleX(1.0376);">1</div>
<div class="b" style="left:1655.0px;top:1049.6px;width:245.0px;height:61.4px;background:#f5f5f5;border:1.5px solid #d0d0d0;border-left:2px solid #bdbdbd;border-radius:8px;"></div>
<div class="b" style="left:44.0px;top:1124.0px;width:2658.0px;height:2.0px;background:#f0f0f0;"></div>
<div class="b" style="left:55.0px;top:1136.0px;width:1645.0px;height:504.0px;border:2px solid #8c8c8c;border-radius:9px 9px 0 0;background:#fff;"></div>
<div class="b" style="left:56.0px;top:1203.0px;width:1644.0px;height:2.0px;background:#8c8c8c;"></div>
<div class="t" style="left:84.62px;top:1154.26px;font-size:32.41px;color:#444;transform:scaleX(1.0067);">Normal</div>
<svg class="s" style="left:260px;top:1140px;" width="520" height="60" viewBox="260 1140 520 60"><g transform="translate(255.50,1148.80) scale(2.6,2.35)"><polygon style="stroke:#444;stroke-width:2;fill:#444;stroke-linejoin:round" points="7 11 9 13 11 11 7 11"/><polygon style="stroke:#444;stroke-width:2;fill:#444;stroke-linejoin:round" points="7 7 9 5 11 7 7 7"/></g><g transform="translate(315.30,1148.10) scale(2.33)"><path style="stroke:#444;stroke-width:2;fill:none;stroke-linecap:round;stroke-linejoin:round;" d="M5,4H9.5A2.5,2.5,0,0,1,12,6.5v0A2.5,2.5,0,0,1,9.5,9H5A0,0,0,0,1,5,9V4A0,0,0,0,1,5,4Z"/><path style="stroke:#444;stroke-width:2;fill:none;stroke-linecap:round;stroke-linejoin:round;" d="M5,9h5.5A2.5,2.5,0,0,1,13,11.5v0A2.5,2.5,0,0,1,10.5,14H5a0,0,0,0,1,0,0V9A0,0,0,0,1,5,9Z"/></g><g transform="translate(382.90,1148.10) scale(2.33)"><line style="stroke:#444;stroke-width:2;fill:none;stroke-linecap:round;stroke-linejoin:round;" x1="7" x2="13" y1="4" y2="4"/><line style="stroke:#444;stroke-width:2;fill:none;stroke-linecap:round;stroke-linejoin:round;" x1="5" x2="11" y1="14" y2="14"/><line style="stroke:#444;stroke-width:2;fill:none;stroke-linecap:round;stroke-linejoin:round;" x1="8" x2="10" y1="14" y2="4"/></g><g transform="translate(451.80,1148.10) scale(2.33)"><path style="stroke:#444;stroke-width:2;fill:none;stroke-linecap:round;stroke-linejoin:round;" d="M5,3V9a4.012,4.012,0,0,0,4,4H9a4.012,4.012,0,0,0,4-4V3"/><rect style="fill:#444" height="1" rx="0.5" ry="0.5" width="12" x="3" y="15"/></g><g transform="translate(518.70,1148.10) scale(2.33)"><line style="stroke:#444;stroke-width:2;fill:none;stroke-linecap:round;stroke-linejoin:round;" x1="7" x2="15" y1="4" y2="4"/><line style="stroke:#444;stroke-width:2;fill:none;stroke-linecap:round;stroke-linejoin:round;" x1="7" x2="15" y1="9" y2="9"/><line style="stroke:#444;stroke-width:2;fill:none;stroke-linecap:round;stroke-linejoin:round;" x1="7" x2="15" y1="14" y2="14"/><line style="stroke:#444;stroke-width:2;fill:none;stroke-linecap:round;stroke-linejoin:round;stroke-width:1" x1="2.5" x2="4.5" y1="5.5" y2="5.5"/><path style="fill:#444" d="M3.5,6A0.5,0.5,0,0,1,3,5.5V3.085l-0.276.138A0.5,0.5,0,0,1,2.053,3c-0.124-.247-0.023-0.324.224-0.447l1-.5A0.5,0.5,0,0,1,4,2.5v3A0.5,0.5,0,0,1,3.5,6Z"/><path style="stroke:#444;stroke-width:2;fill:none;stroke-linecap:round;stroke-linejoin:round;stroke-width:1" d="M4.5,10.5h-2c0-.234,1.85-1.076,1.85-2.234A0.959,0.959,0,0,0,2.5,8.156"/><path style="stroke:#444;stroke-width:2;fill:none;stroke-linecap:round;stroke-linejoin:round;stroke-width:1" d="M2.5,14.846a0.959,0.959,0,0,0,1.85-.109A0.7,0.7,0,0,0,3.75,14a0.688,0.688,0,0,0,.6-0.736,0.959,0.959,0,0,0-1.850-.109"/></g><g transform="translate(588.30,1148.10) scale(2.33)"><line style="stroke:#444;stroke-width:2;fill:none;stroke-linecap:round;stroke-linejoin:round;" x1="6" x2="15" y1="4" y2="4"/><line style="stroke:#444;stroke-width:2;fill:none;stroke-linecap:round;stroke-linejoin:round;" x1="6" x2="15" y1="9" y2="9"/><line style="stroke:#444;stroke-width:2;fill:none;stroke-linecap:round;stroke-linejoin:round;" x1="6" x2="15" y1="14" y2="14"/><line style="stroke:#444;stroke-width:2;fill:none;stroke-linecap:round;stroke-linejoin:round;" x1="3" x2="3" y1="4" y2="4"/><line style="stroke:#444;stroke-width:2;fill:none;stroke-linecap:round;stroke-linejoin:round;" x1="3" x2="3" y1="9" y2="9"/><line style="stroke:#444;stroke-width:2;fill:none;stroke-linecap:round;stroke-linejoin:round;" x1="3" x2="3" y1="14" y2="14"/></g><g transform="translate(655.90,1148.10) scale(2.33)"><path style="fill:#444" d="M15.5,15H13.861a3.858,3.858,0,0,0,1.914-2.975,1.8,1.8,0,0,0-1.6-1.751A1.921,1.921,0,0,0,12.021,11.7a0.50013,0.50013,0,1,0,.957.291h0a0.914,0.914,0,0,1,1.053-.725,0.81,0.81,0,0,1,.744.762c0,1.076-1.16971,1.86982-1.93971,2.43082A1.45639,1.45639,0,0,0,12,15.5a0.5,0.5,0,0,0,.5.5h3A0.5,0.5,0,0,0,15.5,15Z"/><path style="fill:#444" d="M9.65,5.241a1,1,0,0,0-1.409.108L6,7.964,3.759,5.349A1,1,0,0,0,2.192,6.59178Q2.21541,6.6213,2.241,6.649L4.684,9.5,2.241,12.35A1,1,0,0,0,3.71,13.70722q0.02557-.02768.049-0.05722L6,11.036,8.241,13.65a1,1,0,1,0,1.567-1.24277Q9.78459,12.3777,9.759,12.35L7.316,9.5,9.759,6.651A1,1,0,0,0,9.65,5.241Z"/></g><g transform="translate(725.50,1148.10) scale(2.33)"><path style="fill:#444" d="M15.5,7H13.861a4.015,4.015,0,0,0,1.914-2.975,1.8,1.8,0,0,0-1.6-1.751A1.922,1.922,0,0,0,12.021,3.7a0.5,0.5,0,1,0,.957.291,0.917,0.917,0,0,1,1.053-.725,0.81,0.81,0,0,1,.744.762c0,1.077-1.164,1.925-1.934,2.486A1.423,1.423,0,0,0,12,7.5a0.5,0.5,0,0,0,.5.5h3A0.5,0.5,0,0,0,15.5,7Z"/><path style="fill:#444" d="M9.651,5.241a1,1,0,0,0-1.41.108L6,7.964,3.759,5.349a1,1,0,1,0-1.519,1.3L4.683,9.5,2.241,12.35a1,1,0,1,0,1.519,1.3L6,11.036,8.241,13.65a1,1,0,0,0,1.519-1.3L7.317,9.5,9.759,6.651A1,1,0,0,0,9.651,5.241Z"/></g></svg>
<div class="b" style="left:790.7px;top:1144.3px;width:239.3px;height:49.3px;background:#e0e0e0;border-radius:9px;"></div>
<svg class="s" style="left:805px;top:1150px;" width="45" height="40" viewBox="805 1150 45 40"><path d="M812,1168.3 H842.5 M827.25,1153 V1183.6" stroke="#777" stroke-width="3.4"/></svg>
<div class="t" style="left:852.94px;top:1151.86px;font-size:31.10px;color:#787878;transform:scaleX(0.9271);">Add Analysis</div>
<div class="t" style="left:84.40px;top:1229.06px;font-size:32.41px;color:#1a1a1a;font-weight:700;transform:scaleX(0.9796);">OLH02745 (NMR)</div>
<div class="b" style="left:1662.0px;top:1042.0px;width:1584.0px;height:557.0px;background:#fff;border-radius:17px 18px 0 0;"></div>
<div class="b" style="left:1662.0px;top:1042.0px;width:1584.0px;height:60.0px;background:#e0e0e0;border-radius:17px 18px 0 0;border-bottom:2.5px solid #cdcdcd;"></div>
<div class="b" style="left:1662.0px;top:1120.5px;width:1580.0px;height:61.5px;background:#e0e0e0;border-bottom:2.5px solid #cdcdcd;"></div>
<div class="t" style="left:1692.36px;top:1051.97px;font-size:35.47px;color:#333;transform:scaleX(1.0170);">Solvents</div>
<div class="t" style="left:2200.54px;top:1052.09px;font-size:35.32px;color:#333;transform:scaleX(0.9521);">Reaction molarity:</div>
<div class="t" style="left:2478.53px;top:1052.09px;font-size:35.32px;color:#262626;-webkit-text-stroke:0.55px #262626;transform:scaleX(0.9897);">0.00500 mmol/ml</div>
<div class="b" style="left:3242.0px;top:1060.0px;width:4.0px;height:539.0px;background:#f0f0f0;"></div>
<div class="t" style="left:1692.15px;top:1132.08px;font-size:36.05px;color:#333;transform:scaleX(1.0102);">Conditions</div>
<svg class="s" style="left:3140px;top:1040px;" width="60" height="130" viewBox="3140 1040 60 130"><g transform="translate(3147.9,1043.5) scale(2.27)"><path d="M16.59 8.59L12 13.17 7.41 8.59 6 10l6 6 6-6z" fill="#666"/></g><g transform="translate(3147.9,1123.8) scale(2.27)"><path d="M12 8l-6 6 1.41 1.41L12 10.83l4.59 4.58L18 14z" fill="#666"/></g></svg>
<div class="t" style="left:1665.70px;top:1195.26px;font-size:29.22px;color:#9a9a9a;transform:scaleX(0.9821);">Status</div>
<div class="t" style="left:2190.38px;top:1195.26px;font-size:29.22px;color:#9a9a9a;transform:scaleX(0.9940);">Start date</div>
<div class="t" style="left:2714.63px;top:1193.75px;font-size:31.83px;color:#9a9a9a;transform:scaleX(0.9076);">Finished date</div>
<div class="b" style="left:1665.5px;top:1231.7px;width:513.2px;height:59.5px;background:#fff;border:2px solid #454545;border-radius:8px;"></div>
<div class="t" style="left:1675.04px;top:1241.72px;font-size:31.40px;color:#222;transform:scaleX(0.9932);">Done</div>
<svg class="s" style="left:2130px;top:1250px;" width="40" height="25" viewBox="2130 1250 40 25"><polygon points="2138.2,1256 2162.1,1256 2150.15,1269" fill="#757575"/></svg>
<div class="b" style="left:2191.6px;top:1231.9px;width:514.0px;height:59.1px;background:#fff;border:2px solid #454545;border-bottom:6px solid #d9463f;border-radius:8px;"></div>
<div class="t" style="left:2203.77px;top:1241.92px;font-size:31.40px;color:#222;">03.11.22</div>
<div class="b" style="left:2717.1px;top:1231.0px;width:516.1px;height:60.0px;background:#fff;border:2px solid #454545;border-radius:8px;"></div>
<div class="t" style="left:2737.49px;top:1243.33px;font-size:31.98px;color:#222;transform:scaleX(0.9659);">03.05.2023 12:38</div>
<svg class="s" style="left:2630px;top:1225px;" width="580" height="65" viewBox="2630 1225 580 65"><g transform="translate(2639.6,1232.8) scale(2.4)"><path d="M17 12h-5v5h5v-5zM16 1v2H8V1H6v2H5c-1.11 0-1.99.9-1.99 2L3 19c0 1.1.89 2 2 2h14c1.1 0 2-.9 2-2V5c0-1.1-.9-2-2-2h-1V1h-2zm3 18H5V8h14v11z" fill="#757575"/></g><g transform="translate(3143.2,1232.8) scale(2.4)"><path d="M17 12h-5v5h5v-5zM16 1v2H8V1H6v2H5c-1.11 0-1.99.9-1.99 2L3 19c0 1.1.89 2 2 2h14c1.1 0 2-.9 2-2V5c0-1.1-.9-2-2-2h-1V1h-2zm3 18H5V8h14v11z" fill="#757575"/></g></svg>
<div class="t" style="left:1666.94px;top:1312.59px;font-size:30.96px;color:#9a9a9a;transform:scaleX(0.9457);">Additional information for details</div>
<div class="b" style="left:1666.0px;top:1350.2px;width:1567.3px;height:289.8px;border:2px solid #8c8c8c;border-radius:9px 9px 0 0;background:#fff;"></div>
<div class="b" style="left:1667.0px;top:1412.5px;width:1565.0px;height:2.0px;background:#8c8c8c;"></div>
<div class="t" style="left:1696.41px;top:1366.43px;font-size:32.56px;color:#444;transform:scaleX(0.9693);">Normal</div>
<svg class="s" style="left:1870px;top:1355px;" width="520" height="55" viewBox="1870 1355 520 55"><g transform="translate(1865.00,1361.50) scale(2.35,2.42)"><polygon style="stroke:#444;stroke-width:2;fill:#444;stroke-linejoin:round" points="7 11 9 13 11 11 7 11"/><polygon style="stroke:#444;stroke-width:2;fill:#444;stroke-linejoin:round" points="7 7 9 5 11 7 7 7"/></g><g transform="translate(1921.80,1362.60) scale(2.2)"><path style="stroke:#444;stroke-width:2;fill:none;stroke-linecap:round;stroke-linejoin:round;" d="M5,4H9.5A2.5,2.5,0,0,1,12,6.5v0A2.5,2.5,0,0,1,9.5,9H5A0,0,0,0,1,5,9V4A0,0,0,0,1,5,4Z"/><path style="stroke:#444;stroke-width:2;fill:none;stroke-linecap:round;stroke-linejoin:round;" d="M5,9h5.5A2.5,2.5,0,0,1,13,11.5v0A2.5,2.5,0,0,1,10.5,14H5a0,0,0,0,1,0,0V9A0,0,0,0,1,5,9Z"/></g><g transform="translate(1988.40,1362.60) scale(2.2)"><line style="stroke:#444;stroke-width:2;fill:none;stroke-linecap:round;stroke-linejoin:round;" x1="7" x2="13" y1="4" y2="4"/><line style="stroke:#444;stroke-width:2;fill:none;stroke-linecap:round;stroke-linejoin:round;" x1="5" x2="11" y1="14" y2="14"/><line style="stroke:#444;stroke-width:2;fill:none;stroke-linecap:round;stroke-linejoin:round;" x1="8" x2="10" y1="14" y2="4"/></g><g transform="translate(2055.20,1362.60) scale(2.2)"><path style="stroke:#444;stroke-width:2;fill:none;stroke-linecap:round;stroke-linejoin:round;" d="M5,3V9a4.012,4.012,0,0,0,4,4H9a4.012,4.012,0,0,0,4-4V3"/><rect style="fill:#444" height="1" rx="0.5" ry="0.5" width="12" x="3" y="15"/></g><g transform="translate(2123.00,1362.60) scale(2.2)"><line style="stroke:#444;stroke-width:2;fill:none;stroke-linecap:round;stroke-linejoin:round;" x1="7" x2="15" y1="4" y2="4"/><line style="stroke:#444;stroke-width:2;fill:none;stroke-linecap:round;stroke-linejoin:round;" x1="7" x2="15" y1="9" y2="9"/><line style="stroke:#444;stroke-width:2;fill:none;stroke-linecap:round;stroke-linejoin:round;" x1="7" x2="15" y1="14" y2="14"/><line style="stroke:#444;stroke-width:2;fill:none;stroke-linecap:round;stroke-linejoin:round;stroke-width:1" x1="2.5" x2="4.5" y1="5.5" y2="5.5"/><path style="fill:#444" d="M3.5,6A0.5,0.5,0,0,1,3,5.5V3.085l-0.276.138A0.5,0.5,0,0,1,2.053,3c-0.124-.247-0.023-0.324.224-0.447l1-.5A0.5,0.5,0,0,1,4,2.5v3A0.5,0.5,0,0,1,3.5,6Z"/><path style="stroke:#444;stroke-width:2;fill:none;stroke-linecap:round;stroke-linejoin:round;stroke-width:1" d="M4.5,10.5h-2c0-.234,1.85-1.076,1.85-2.234A0.959,0.959,0,0,0,2.5,8.156"/><path style="stroke:#444;stroke-width:2;fill:none;stroke-linecap:round;stroke-linejoin:round;stroke-width:1" d="M2.5,14.846a0.959,0.959,0,0,0,1.85-.109A0.7,0.7,0,0,0,3.75,14a0.688,0.688,0,0,0,.6-0.736,0.959,0.959,0,0,0-1.850-.109"/></g><g transform="translate(2188.60,1362.60) scale(2.2)"><line style="stroke:#444;stroke-width:2;fill:none;stroke-linecap:round;stroke-linejoin:round;" x1="6" x2="15" y1="4" y2="4"/><line style="stroke:#444;stroke-width:2;fill:none;stroke-linecap:round;stroke-linejoin:round;" x1="6" x2="15" y1="9" y2="9"/><line style="stroke:#444;stroke-width:2;fill:none;stroke-linecap:round;stroke-linejoin:round;" x1="6" x2="15" y1="14" y2="14"/><line style="stroke:#444;stroke-width:2;fill:none;stroke-linecap:round;stroke-linejoin:round;" x1="3" x2="3" y1="4" y2="4"/><line style="stroke:#444;stroke-width:2;fill:none;stroke-linecap:round;stroke-linejoin:round;" x1="3" x2="3" y1="9" y2="9"/><line style="stroke:#444;stroke-width:2;fill:none;stroke-linecap:round;stroke-linejoin:round;" x1="3" x2="3" y1="14" y2="14"/></g><g transform="translate(2256.10,1362.60) scale(2.2)"><path style="fill:#444" d="M15.5,15H13.861a3.858,3.858,0,0,0,1.914-2.975,1.8,1.8,0,0,0-1.6-1.751A1.921,1.921,0,0,0,12.021,11.7a0.50013,0.50013,0,1,0,.957.291h0a0.914,0.914,0,0,1,1.053-.725,0.81,0.81,0,0,1,.744.762c0,1.076-1.16971,1.86982-1.93971,2.43082A1.45639,1.45639,0,0,0,12,15.5a0.5,0.5,0,0,0,.5.5h3A0.5,0.5,0,0,0,15.5,15Z"/><path style="fill:#444" d="M9.65,5.241a1,1,0,0,0-1.409.108L6,7.964,3.759,5.349A1,1,0,0,0,2.192,6.59178Q2.21541,6.6213,2.241,6.649L4.684,9.5,2.241,12.35A1,1,0,0,0,3.71,13.70722q0.02557-.02768.049-0.05722L6,11.036,8.241,13.65a1,1,0,1,0,1.567-1.24277Q9.78459,12.3777,9.759,12.35L7.316,9.5,9.759,6.651A1,1,0,0,0,9.65,5.241Z"/></g><g transform="translate(2322.70,1362.60) scale(2.2)"><path style="fill:#444" d="M15.5,7H13.861a4.015,4.015,0,0,0,1.914-2.975,1.8,1.8,0,0,0-1.6-1.751A1.922,1.922,0,0,0,12.021,3.7a0.5,0.5,0,1,0,.957.291,0.917,0.917,0,0,1,1.053-.725,0.81,0.81,0,0,1,.744.762c0,1.077-1.164,1.925-1.934,2.486A1.423,1.423,0,0,0,12,7.5a0.5,0.5,0,0,0,.5.5h3A0.5,0.5,0,0,0,15.5,7Z"/><path style="fill:#444" d="M9.651,5.241a1,1,0,0,0-1.41.108L6,7.964,3.759,5.349a1,1,0,1,0-1.519,1.3L4.683,9.5,2.241,12.35a1,1,0,1,0,1.519,1.3L6,11.036,8.241,13.65a1,1,0,0,0,1.519-1.3L7.317,9.5,9.759,6.651A1,1,0,0,0,9.651,5.241Z"/></g></svg>
</body></html>
